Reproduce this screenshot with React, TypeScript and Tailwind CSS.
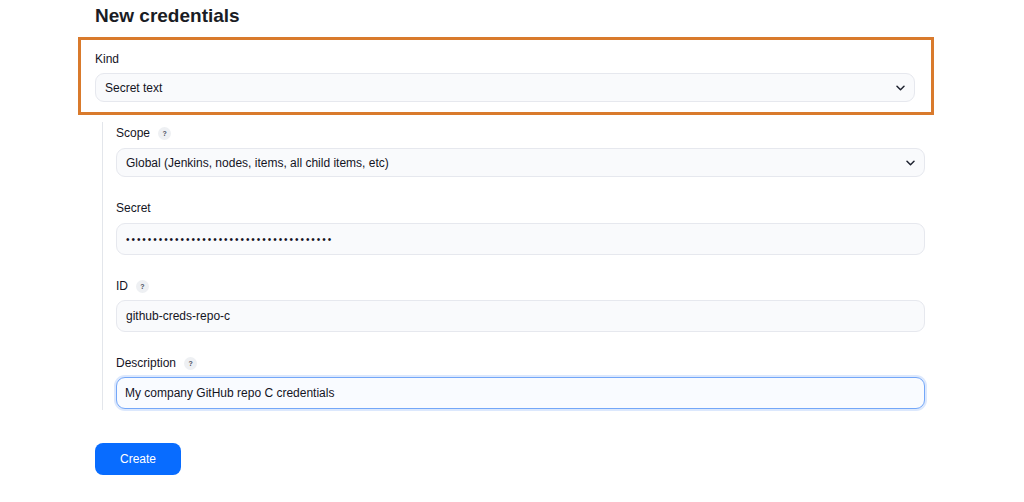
import React from "react";

const Chevron = () => (
  <svg width="9" height="6" viewBox="0 0 9 6" fill="none" className="shrink-0">
    <path d="M1 1.2l3.5 3.5 3.5-3.5" stroke="#1f2330" strokeWidth="1.5" strokeLinecap="round" strokeLinejoin="round" />
  </svg>
);

const Help = () => (
  <span className="inline-flex items-center justify-center w-[13px] h-[13px] rounded-full bg-[#eef0f3] text-[7px] font-bold text-[#4b5060] leading-none">
    ?
  </span>
);

const Label = ({ text, help }: { text: string; help?: boolean }) => (
  <div className="h-5 pt-[2px] flex items-start gap-[8px] text-[12px] text-[#14141f] leading-[18px]">
    <span>{text}</span>
    {help && (
      <span className="h-[18px] flex items-center">
        <Help />
      </span>
    )}
  </div>
);

const Select = ({ value, className = "" }: { value: string; className?: string }) => (
  <div
    className={`h-[29px] flex items-center justify-between pl-[9px] pr-[9px] rounded-[9px] border border-[#e6e8ee] bg-[#f9fafc] text-[12px] text-[#14141f] ${className}`}
  >
    <span>{value}</span>
    <Chevron />
  </div>
);

const Input = ({ children, focused = false }: { children: React.ReactNode; focused?: boolean }) => (
  <div
    className={
      focused
        ? "h-[32px] flex items-center pl-[8px] rounded-[9px] border-[1.5px] border-[#74a7f8] bg-[#f9fbff] shadow-[0_0_0_2px_#dce8fd] text-[12px] text-[#14141f]"
        : "h-[32px] flex items-center pl-[9px] rounded-[9px] border border-[#e6e8ee] bg-[#f9fafc] text-[12px] text-[#14141f]"
    }
  >
    {children}
  </div>
);

export default function App() {
  return (
    <div className="w-[1024px] h-[502px] bg-white overflow-hidden font-['Liberation_Sans',sans-serif]">
      <div className="pl-[95px] pt-[2px]">
        <h1 className="text-[19px] leading-7 font-bold text-[#1a1c24]">New credentials</h1>

        <div className="mt-[7px] ml-[-17px] w-[856px] h-[78px] border-[3px] border-[#d97a2c] pl-[14px] pt-[8px]">
          <Label text="Kind" />
          <Select value="Secret text" className="mt-[5px] w-[820px]" />
        </div>

        <div className="mt-[7px] ml-[7px] w-[823px] border-l border-[#e3e6eb] pl-[13px] pb-[1px]">
          <Label text="Scope" help />
          <Select value="Global (Jenkins, nodes, items, all child items, etc)" className="mt-[6px]" />

          <div className="mt-[20px]">
            <Label text="Secret" />
            <div className="mt-[6px]">
              <Input>
                <span className="text-[10px] tracking-[1.95px] text-[#14141f]">
                  {"•".repeat(38)}
                </span>
              </Input>
            </div>
          </div>

          <div className="mt-[20px]">
            <Label text="ID" help />
            <div className="mt-[5px]">
              <Input>github-creds-repo-c</Input>
            </div>
          </div>

          <div className="mt-[20px]">
            <Label text="Description" help />
            <div className="mt-[5px]">
              <Input focused>My company GitHub repo C credentials</Input>
            </div>
          </div>
        </div>

        <button className="mt-[33px] w-[86px] h-[32px] rounded-[8px] bg-[#086cff] text-white text-[12px] flex items-center justify-center">
          Create
        </button>
      </div>
    </div>
  );
}
